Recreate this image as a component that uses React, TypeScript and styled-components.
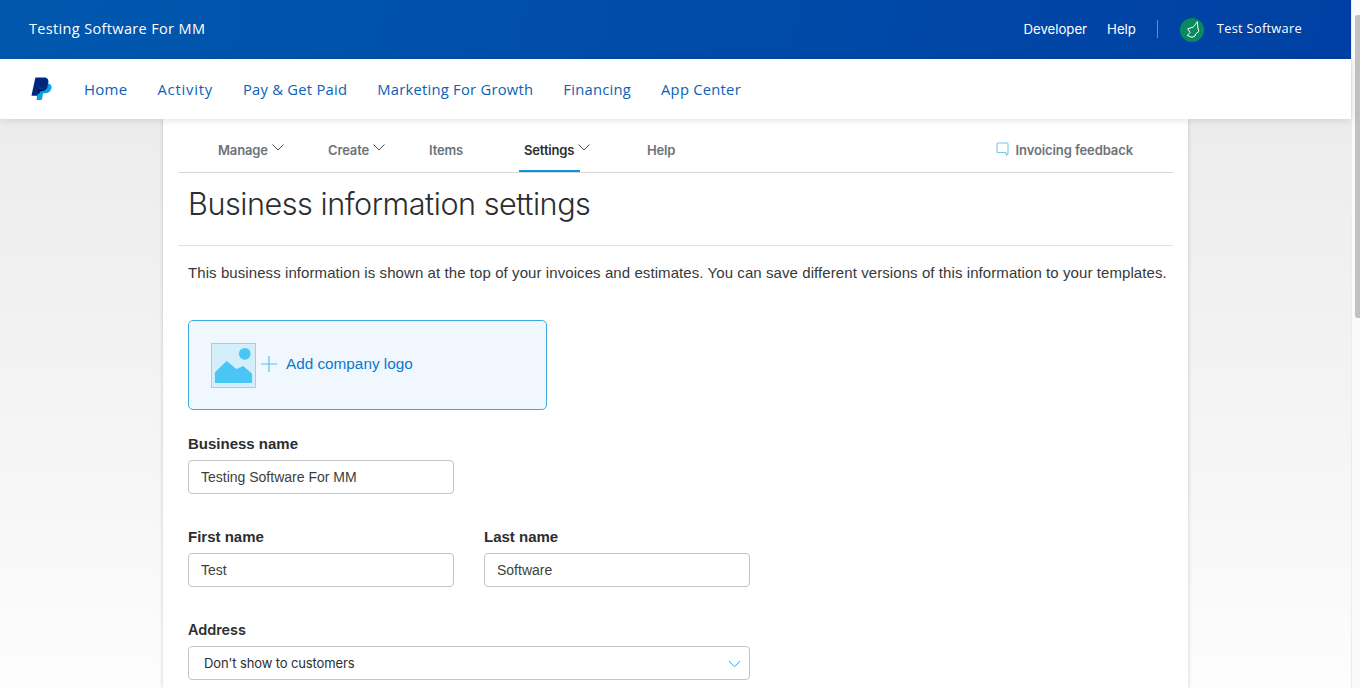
import React from "react";
import styled, { createGlobalStyle } from "styled-components";

const GlobalStyle = createGlobalStyle`
  html, body {
    margin: 0;
    padding: 0;
    height: 688px;
    overflow: hidden;
    font-family: "Liberation Sans", Arial, sans-serif;
  }
`;

const Viewport = styled.div`
  width: 1360px;
  height: 688px;
  overflow: hidden;
  display: flex;
  background: #fff;
`;

const Page = styled.div`
  width: 1351px;
  height: 688px;
  flex: none;
  display: flex;
  flex-direction: column;
  background: linear-gradient(#e9e9e9 0, #f6f6f6 480px, #fdfdfd 688px);
`;

const Scrollbar = styled.div`
  width: 9px;
  height: 688px;
  flex: none;
  box-sizing: border-box;
  padding-top: 15px;
  background: #fafafa;
  border-left: 1px solid #ececec;
  display: flex;
  justify-content: flex-end;
`;

const ScrollThumb = styled.div`
  width: 5px;
  height: 303px;
  border-radius: 3px 0 0 3px;
  background: #c1c1c1;
`;

const TopBar = styled.header`
  height: 59px;
  flex: none;
  padding: 0 49px 2px 29px;
  box-sizing: border-box;
  display: flex;
  align-items: center;
  justify-content: space-between;
  background: linear-gradient(100deg, #0058ad 0%, #0040a4 100%);
  color: #fff;
  font-family: "Open Sans", "Noto Sans", sans-serif;
`;

const AccountName = styled.div`
  font-size: 14.5px;
  letter-spacing: 0.35px;
`;

const TopRight = styled.div`
  display: flex;
  align-items: center;
`;

const TopLink = styled.a`
  font-family: "Inter", "Liberation Sans", sans-serif;
  font-size: 13.2px;
  margin-right: 20px;
`;

const Divider = styled.div`
  width: 1px;
  height: 18px;
  background: #5f8fcb;
  margin: 0 22px 0 1px;
`;

const Avatar = styled.div`
  width: 24px;
  height: 24px;
  border-radius: 50%;
  background: #078a5f;
  margin: 2px 13px 0 0;
`;

const UserName = styled.div`
  font-size: 12.8px;
  letter-spacing: 0.3px;
  margin-top: -2px;
`;

const MainNav = styled.nav`
  height: 60px;
  flex: none;
  padding-left: 31px;
  display: flex;
  align-items: center;
  background: #fff;
  box-shadow: 0 1px 8px rgba(0, 0, 0, 0.12);
  position: relative;
  z-index: 2;
  font-family: "Open Sans", "Noto Sans", sans-serif;
`;

const NavItems = styled.div`
  display: flex;
  align-items: center;
  gap: 30px;
  margin-left: 32px;
`;

const NavItem = styled.a<{ $big?: boolean; $wide?: boolean }>`
  color: #0b61b5;
  font-size: ${p => (p.$big ? "15px" : "14.75px")};
  letter-spacing: ${p => (p.$wide ? "0.8px" : "0.25px")};
`;

const Card = styled.main`
  width: 1025px;
  margin-left: 163px;
  flex: 1;
  min-height: 0;
  padding: 0 15px;
  box-sizing: border-box;
  background: #fff;
  box-shadow: 0 0 4px rgba(0, 0, 0, 0.2);
`;

const SubNav = styled.div`
  height: 53px;
  display: flex;
  align-items: stretch;
  justify-content: space-between;
  border-bottom: 1px solid #d9d9d9;
  font-family: "Inter", "Liberation Sans", sans-serif;
`;

const SubTabs = styled.div`
  display: flex;
  padding-left: 40px;
`;

const SubTab = styled.a<{ $active?: boolean; $width: number }>`
  width: ${p => p.$width}px;
  display: flex;
  align-items: flex-start;
  box-sizing: border-box;
  padding-top: 22px;
  font-size: 13px;
  font-weight: 600;
  line-height: 18px;
  letter-spacing: -0.15px;
  color: ${p => (p.$active ? "#2c2e2f" : "#6c7378")};
`;

const ActiveLabel = styled.span`
  display: flex;
  align-items: flex-start;
  height: 31px;
  box-sizing: border-box;
  padding-left: 5px;
  margin-left: -5px;
  width: 61px;
  border-bottom: 2px solid #0a96dc;
  flex: none;
  white-space: nowrap;
`;

const Chevron = styled.svg`
  margin-left: 4px;
  margin-top: 3px;
  flex: none;
`;

const SelectChevron = styled.svg`
  flex: none;
  margin-top: 1px;
`;

const Feedback = styled.a`
  display: flex;
  align-items: flex-start;
  padding: 22px 40px 0 0;
  font-size: 13px;
  font-weight: 600;
  line-height: 18px;
  letter-spacing: -0.1px;
  color: #6c7378;
`;

const FeedbackIcon = styled.svg`
  margin: 1px 7px 0 0;
`;

const TitleRow = styled.div`
  height: 73px;
  padding: 8px 0 0 10px;
  box-sizing: border-box;
  border-bottom: 1px solid #e2e2e2;
`;

const Title = styled.h1`
  margin: 0;
  font-family: "Inter", "Liberation Sans", sans-serif;
  font-weight: 300;
  font-size: 30.6px;
  line-height: 46px;
  color: #2c2e2f;
  letter-spacing: -0.47px;
`;

const Form = styled.div`
  padding-left: 10px;
`;

const Intro = styled.p`
  margin: 18px 0 38px;
  font-size: 15px;
  line-height: 18px;
  letter-spacing: 0.08px;
  color: #37393a;
  white-space: nowrap;
`;

const LogoBox = styled.button`
  width: 359px;
  height: 90px;
  box-sizing: border-box;
  display: flex;
  align-items: center;
  padding: 0 0 0 22px;
  border: 1px solid #3faadf;
  border-radius: 5px;
  background: #f0f7fe;
  margin-bottom: 24px;
  font-family: inherit;
`;

const PictureIcon = styled.svg`
  flex: none;
  margin-top: 1px;
`;

const PlusIcon = styled.svg`
  flex: none;
  margin: 0 0 2px 5px;
`;

const LogoText = styled.span`
  margin: 0 0 3px 9px;
  font-size: 15.3px;
  color: #0a78cd;
`;

const Row = styled.div`
  display: flex;
  gap: 30px;
  margin-bottom: 33px;
`;

const Field = styled.div`
  display: flex;
  flex-direction: column;
`;

const Label = styled.label<{ $plain?: boolean }>`
  font-family: ${p => (p.$plain ? '"Inter", sans-serif' : '"Liberation Sans", Arial, sans-serif')};
  font-size: ${p => (p.$plain ? "14.4px" : "15px")};
  font-weight: ${p => (p.$plain ? 600 : 700)};
  line-height: 20px;
  color: #2c2e2f;
  margin-bottom: 6px;
`;

const Input = styled.input`
  width: 266px;
  height: 34px;
  box-sizing: border-box;
  padding: 0 12px;
  border: 1px solid #c4c4c4;
  border-radius: 4px;
  background: #fff;
  font-family: inherit;
  font-size: 14px;
  color: #3d3f40;
`;

const SelectBox = styled.div`
  width: 562px;
  height: 34px;
  box-sizing: border-box;
  display: flex;
  align-items: center;
  justify-content: space-between;
  padding: 0 8px 0 15px;
  border: 1px solid #c4c4c4;
  border-radius: 4px;
  background: #fff;
  font-family: "Inter", sans-serif;
  font-size: 13px;
  letter-spacing: -0.12px;
  color: #2c2e2f;
`;

const ChevronDown = () => (
  <Chevron width="12" height="7" viewBox="0 0 12 7" fill="none">
    <path d="M0.5 0.5l5.500 5.500L11.500 0.500" stroke="#4a4f54" strokeWidth="1" />
  </Chevron>
);

const PayPalMark = () => (
  <svg width="21" height="24" viewBox="0 0 22 26">
    <path
      d="M8 7h9.500c3.400 0 4.900 2.300 4.200 5.400-.8 3.400-3.300 5.300-6.700 5.300h-2.300l-1.200 6.300c-.1.500-.4.800-1 .800H5.600L8 7z"
      fill="#0a9fe6"
    />
    <path
      d="M5 .6h8.300c3.700 0 5.800 2 5.100 5.600-.8 4-3.700 6.300-7.500 6.300H8.200l-1.300 7c-.1.500-.4.800-1 .800H.6c-.3 0-.5-.2-.4-.5L4.200 1.300C4.300.9 4.600.6 5 .6z"
      fill="#00277f"
    />
    <path
      d="M7.300 12.500h3.600c2.900 0 5.400-1.400 6.700-3.900.3.500-.1 2.500-.8 3.700-1.200 2.200-3.300 3.300-5.800 3.300H9.400l-.5 2.400-2.600.4 1-5.900z"
      fill="#001c64"
    />
  </svg>
);

const SoftwareBadge = () => (
  <svg width="24" height="24" viewBox="0 0 24 24" fill="none">
    <path
      d="M17.300 3.700L14.500 7.500 13.300 9 7.700 10.800 10 14.500 7.300 17.500 12 19.300 15 18 15.500 16 18.700 13.700 17.800 9z"
      stroke="#fff"
      strokeWidth="1"
      strokeLinejoin="round"
    />
  </svg>
);

const ImagePlaceholder = () => (
  <PictureIcon width="45" height="45" viewBox="0 0 46 46">
    <rect x="0.5" y="0.5" width="45" height="45" fill="#d4effb" stroke="#8ed5f5" />
    <circle cx="34.500" cy="11" r="6" fill="#4ac6f4" />
    <path d="M4 30l12-11.500 10 8 7-3 9 8V41H4z" fill="#4ac6f4" />
  </PictureIcon>
);

const Plus = () => (
  <PlusIcon width="16" height="16" viewBox="0 0 16 16">
    <path d="M8 0v16M0 8h16" stroke="#5cc0ee" strokeWidth="1.2" />
  </PlusIcon>
);

export default function App() {
  return (
    <Viewport>
      <GlobalStyle />
      <Page>
        <TopBar>
          <AccountName>Testing Software For MM</AccountName>
          <TopRight>
            <TopLink>Developer</TopLink>
            <TopLink>Help</TopLink>
            <Divider />
            <Avatar>
              <SoftwareBadge />
            </Avatar>
            <UserName>Test Software</UserName>
          </TopRight>
        </TopBar>
        <MainNav>
          <PayPalMark />
          <NavItems>
            <NavItem $big>Home</NavItem>
            <NavItem $wide>Activity</NavItem>
            <NavItem>Pay &amp; Get Paid</NavItem>
            <NavItem>Marketing For Growth</NavItem>
            <NavItem>Financing</NavItem>
            <NavItem>App Center</NavItem>
          </NavItems>
        </MainNav>
        <Card>
          <SubNav>
            <SubTabs>
              <SubTab $width={110}>
                Manage
                <ChevronDown />
              </SubTab>
              <SubTab $width={101}>
                Create
                <ChevronDown />
              </SubTab>
              <SubTab $width={95}>Items</SubTab>
              <SubTab $active $width={123}>
                <ActiveLabel>
                  Settings
                  <ChevronDown />
                </ActiveLabel>
              </SubTab>
              <SubTab $width={60}>Help</SubTab>
            </SubTabs>
            <Feedback>
              <FeedbackIcon width="13" height="14" viewBox="0 0 13 14" fill="none">
                <path
                  d="M2 1h9c.6 0 1 .4 1 1v9.500l-1.500 1.500-1-2.500H2c-.6 0-1-.4-1-1V2c0-.6.4-1 1-1z"
                  stroke="#7cc4ee"
                  strokeWidth="1.1"
                />
              </FeedbackIcon>
              Invoicing feedback
            </Feedback>
          </SubNav>
          <TitleRow>
            <Title>Business information settings</Title>
          </TitleRow>
          <Form>
            <Intro>
              This business information is shown at the top of your invoices and estimates. You can save
              different versions of this information to your templates.
            </Intro>
            <LogoBox type="button">
              <ImagePlaceholder />
              <Plus />
              <LogoText>Add company logo</LogoText>
            </LogoBox>
            <Row>
              <Field>
                <Label>Business name</Label>
                <Input defaultValue="Testing Software For MM" />
              </Field>
            </Row>
            <Row>
              <Field>
                <Label>First name</Label>
                <Input defaultValue="Test" />
              </Field>
              <Field>
                <Label>Last name</Label>
                <Input defaultValue="Software" />
              </Field>
            </Row>
            <Row>
              <Field>
                <Label $plain>Address</Label>
                <SelectBox>
                  Don't show to customers
                  <SelectChevron width="13" height="8" viewBox="0 0 13 8" fill="none">
                    <path d="M0.8 1l5.700 5.700L12.200 1" stroke="#2aa5e4" strokeWidth="1" />
                  </SelectChevron>
                </SelectBox>
              </Field>
            </Row>
          </Form>
        </Card>
      </Page>
      <Scrollbar>
        <ScrollThumb />
      </Scrollbar>
    </Viewport>
  );
}
